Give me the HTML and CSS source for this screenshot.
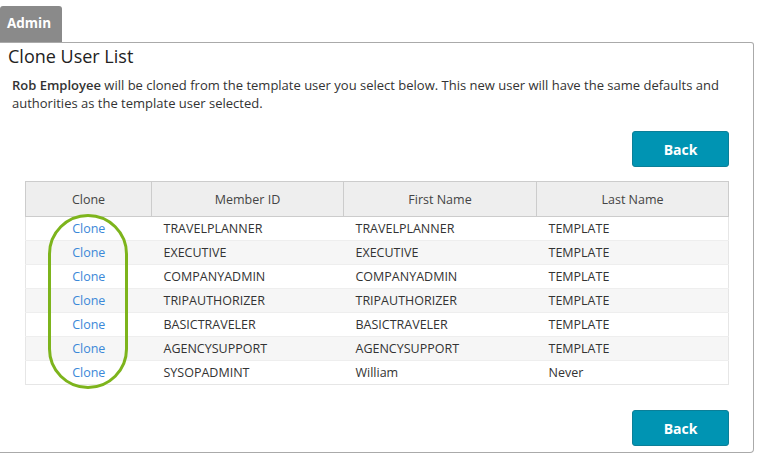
FILE: index.html
```html
<!DOCTYPE html>
<html>
<head>
<meta charset="utf-8">
<link rel="stylesheet" href="styles.css">
</head>
<body>
<div class="tab">Admin</div>
<div class="panel">
  <h1 class="title">Clone User List</h1>
  <p class="intro"><b>Rob Employee</b> will be cloned from the template user you select below. This new user will have the same defaults and authorities as the template user selected.</p>
  <div class="actions"><button class="btn">Back</button></div>
  <div class="table-wrap">
    <table class="grid">
      <thead>
        <tr><th class="c1">Clone</th><th class="c2">Member ID</th><th class="c3">First Name</th><th class="c4">Last Name</th></tr>
      </thead>
      <tbody>
        <tr><td class="link">Clone</td><td>TRAVELPLANNER</td><td>TRAVELPLANNER</td><td>TEMPLATE</td></tr>
        <tr><td class="link">Clone</td><td>EXECUTIVE</td><td>EXECUTIVE</td><td>TEMPLATE</td></tr>
        <tr><td class="link">Clone</td><td>COMPANYADMIN</td><td>COMPANYADMIN</td><td>TEMPLATE</td></tr>
        <tr><td class="link">Clone</td><td>TRIPAUTHORIZER</td><td>TRIPAUTHORIZER</td><td>TEMPLATE</td></tr>
        <tr><td class="link">Clone</td><td>BASICTRAVELER</td><td>BASICTRAVELER</td><td>TEMPLATE</td></tr>
        <tr><td class="link">Clone</td><td>AGENCYSUPPORT</td><td>AGENCYSUPPORT</td><td>TEMPLATE</td></tr>
        <tr><td class="link">Clone</td><td>SYSOPADMINT</td><td>William</td><td>Never</td></tr>
      </tbody>
    </table>
    <div class="highlight"></div>
  </div>
  <div class="actions bottom"><button class="btn">Back</button></div>
</div>
</body>
</html>
```
FILE: styles.css
```css
html, body {
  margin: 0;
  padding: 0;
  background: #fff;
  font-family: "Open Sans", "Liberation Sans", sans-serif;
  color: #333;
}
.tab {
  margin-top: 6px;
  width: 62px;
  height: 36px;
  box-sizing: border-box;
  background: #8a8a8a;
  color: #fff;
  font-weight: bold;
  font-size: 13.5px;
  line-height: 34px;
  padding-left: 7px;
  border-radius: 3px 3px 0 0;
}
.panel {
  width: 754px;
  height: 411px;
  box-sizing: border-box;
  border: 1px solid #aaa;
  border-left: none;
  border-radius: 0 3px 4px 0;
}
.title {
  margin: 0;
  padding: 1px 0 0 8px;
  font-size: 18px;
  font-weight: normal;
  line-height: 24px;
  color: #222;
}
.intro {
  margin: 8px 0 0 0;
  padding: 0 20px 0 12px;
  font-size: 13px;
  line-height: 18px;
  color: #333;
}
.intro b {
  font-weight: 600;
}
.actions {
  display: flex;
  justify-content: flex-end;
  padding-right: 24px;
  margin-top: 19px;
}
.actions.bottom {
  margin-top: 25px;
}
.btn {
  width: 97px;
  height: 36px;
  background: #0094b3;
  border: 1px solid #0b7f98;
  border-radius: 3px;
  color: #fff;
  font-family: "Open Sans", "Liberation Sans", sans-serif;
  font-weight: bold;
  font-size: 14px;
  padding: 0;
}
.table-wrap {
  position: relative;
  margin: 14px 24px 0 25px;
}
.grid {
  width: 704px;
  border-collapse: collapse;
  table-layout: fixed;
  font-size: 12.5px;
}
.grid th {
  background: #eeeeee;
  font-weight: normal;
  color: #444;
  height: 34px;
  border: 1px solid #cccccc;
  padding: 0;
}
.c1 { width: 125px; }
.c2 { width: 191px; }
.c3 { width: 192px; }
.grid td {
  height: 23px;
  padding: 0 0 0 12px;
  border-top: 1px solid #eeeeee;
  color: #333;
}
.grid tbody tr {
  border-left: 1px solid #e6e6e6;
  border-right: 1px solid #e6e6e6;
}
.grid tbody tr:last-child {
  border-bottom: 1px solid #e6e6e6;
}
.grid tbody tr:nth-child(even) td {
  background: #f6f6f6;
}
.grid td.link {
  text-align: center;
  padding: 0;
  color: #3b88d8;
}
.highlight {
  position: absolute;
  left: 23px;
  top: 33px;
  width: 74px;
  height: 169px;
  border: 3.5px solid #7db41c;
  border-radius: 40px;
  pointer-events: none;
}
```
